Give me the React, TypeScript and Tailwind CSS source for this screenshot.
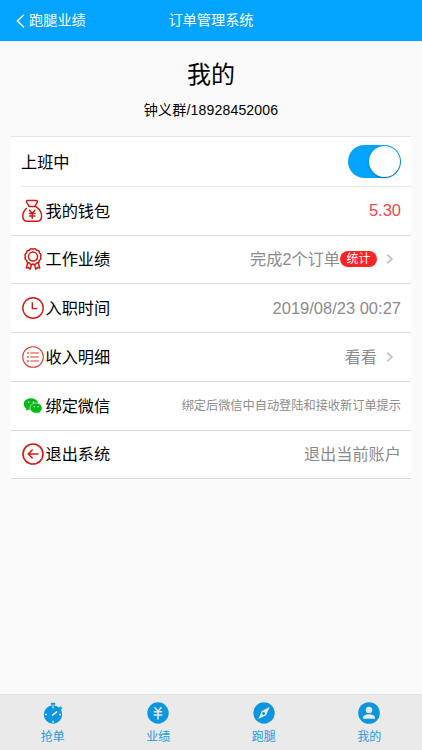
import type { ReactNode } from "react";

function MoneyBagIcon() {
  return (
    <svg viewBox="0 0 22 24" className="h-6 w-[22px]" fill="none" stroke="#d41a12" strokeWidth="1.5" strokeLinecap="round" strokeLinejoin="round">
      <path d="M7.2 7.2 4.6 3.4Q3.9 1.6 5.8 1.4H14Q16 1.6 15.3 3.4L13 7.2" />
      <path d="M7.3 7.4H13.6C16.4 9.2 19.6 13 19.6 17.2 19.6 20.5 17.9 22.2 14.8 22.2H5.5C2.3 22.2.8 20.4.8 17.2.8 14.2 2.3 11.4 4.4 9.5" />
      <path d="M7.6 11.4 10.2 14.2 12.8 11.4M10.2 14.2V19.2M7.5 14.6H12.9M7.5 17H12.9" />
    </svg>
  );
}

function MedalIcon() {
  return (
    <svg viewBox="0 0 22 24" className="h-6 w-[22px]" fill="none" stroke="#d41a12" strokeWidth="1.5" strokeLinecap="round" strokeLinejoin="round">
      <path d="M11 2.2Q13.2.8 14.7 3.3 17.4 3.1 17.4 5.8 19.8 7.2 18.5 9.6 19.8 12.1 17.4 13.4 17.3 16 14.7 15.9 13.2 18.3 11 17 8.8 18.3 7.3 15.9 4.7 16 4.6 13.4 2.2 12.1 3.5 9.6 2.2 7.2 4.6 5.8 4.6 3.1 7.3 3.3 8.8.8 11 2.2Z" />
      <circle cx="11" cy="9.6" r="4.5" />
      <path d="M5.7 16 4.3 21 6.5 20.6 8.2 22.1 9.4 17.8M16.3 16 17.7 21 15.5 20.6 13.8 22.1 12.6 17.8" />
    </svg>
  );
}

function ClockIcon() {
  return (
    <svg viewBox="0 0 22 22" className="size-[22px]" fill="none" stroke="#d41a12" strokeWidth="1.4">
      <circle cx="11" cy="11" r="10.2" />
      <path d="M10.3 5.3V11.6H15" />
    </svg>
  );
}

function ListIcon() {
  return (
    <svg viewBox="0 0 22 22" className="size-[22px]" fill="none" stroke="#d93a2b" strokeWidth="1.1">
      <circle cx="11" cy="11" r="10.3" />
      <path d="M8.3 7H16.8M8.3 11H16.8M8.3 15H16.8" />
      <path d="M5.2 7H6.8M5.2 11H6.8M5.2 15H6.8" strokeWidth="1.6" />
    </svg>
  );
}

function WechatIcon() {
  return (
    <svg viewBox="0 0 22 22" className="size-[22px]">
      <path fill="#06b914" d="M9 3.2C4.9 3.2 1.7 5.8 1.7 9.1c0 1.9 1 3.5 2.7 4.6l-.7 2.2 2.6-1.3c.9.3 1.8.4 2.8.4 4.1 0 7.1-2.5 7.1-5.9S13.1 3.2 9 3.2Z" />
      <path fill="#06b914" stroke="#fff" strokeWidth=".6" d="M14.1 8c-3.5 0-6.1 2.3-6.1 5.1s2.6 5.1 6.1 5.1c.7 0 1.4-.1 2.1-.3l2.1 1.1-.6-1.9c1.5-1 2.4-2.3 2.4-4 0-2.8-2.6-5.1-6-5.1Z" />
      <g fill="#fff">
        <circle cx="6.6" cy="7.3" r=".8" />
        <circle cx="11.4" cy="7.3" r=".8" />
        <circle cx="12.2" cy="11.7" r=".65" />
        <circle cx="16.1" cy="11.7" r=".65" />
      </g>
    </svg>
  );
}

function ExitIcon() {
  return (
    <svg viewBox="0 0 22 22" className="size-[22px]" fill="none" stroke="#d41a12" strokeWidth="1.6" strokeLinecap="round" strokeLinejoin="round">
      <circle cx="11" cy="11" r="10" />
      <path d="M16 11H6.4M10.2 7 6.2 11 10.2 15" />
    </svg>
  );
}

function StopwatchIcon() {
  return (
    <svg viewBox="0 0 22 22" className="size-[22px]">
      <g fill="#0c96e0">
        <path d="M8.8.8h4.4v2H8.8z" />
        <circle cx="11" cy="12.5" r="9.2" />
        <path d="m16.6 6 1.8-1.8 2 1.8-1.8 2z" />
      </g>
      <path d="M10.6 13.2 14.7 9.8" stroke="#eaeaea" strokeWidth="1.6" strokeLinecap="round" />
      <path d="M11 4.2V6.2M11 18.8V20.8M2.9 12.5H4.9M17.1 12.5H19.1" stroke="#eaeaea" strokeWidth="1.3" />
    </svg>
  );
}

function YenIcon() {
  return (
    <svg viewBox="0 0 22 22" className="size-[22px]">
      <circle cx="11" cy="11" r="10.7" fill="#0c96e0" />
      <path d="M7.5 5.2 11 9.2 14.5 5.2M11 9.2V17.6M6.7 9.8H15.3M6.7 13.1H15.3" fill="none" stroke="#eaeaea" strokeWidth="1.5" />
    </svg>
  );
}

function CompassIcon() {
  return (
    <svg viewBox="0 0 22 22" className="size-[22px]">
      <circle cx="11" cy="11" r="10.7" fill="#0c96e0" />
      <path d="M16.7 5.1 13 13.3 5.3 17 8.9 8.9Z" fill="#eaeaea" />
      <circle cx="10.6" cy="11.5" r="1.4" fill="#0c96e0" />
    </svg>
  );
}

function UserIcon() {
  return (
    <svg viewBox="0 0 22 22" className="size-[22px]">
      <circle cx="11" cy="11" r="10.8" fill="#0c96e0" />
      <circle cx="11" cy="7.9" r="3.2" fill="#eaeaea" />
      <path d="M5 16.8V15.6C5 13.5 8.5 12.3 11 12.3S17 13.5 17 15.6V16.8Z" fill="#eaeaea" />
    </svg>
  );
}

function Chevron() {
  return (
    <svg viewBox="0 0 8 12" className="mr-[7px] h-3 w-2" fill="none" stroke="#c4c4c8" strokeWidth="1.8">
      <path d="M1.3 1.6 5.9 6 1.3 10.4" />
    </svg>
  );
}

type Row = {
  label: string;
  icon: ReactNode;
  value: ReactNode;
};

const rows: Row[] = [
  {
    label: "我的钱包",
    icon: <MoneyBagIcon />,
    value: <span className="text-[16.5px] text-[#ee4650]">5.30</span>,
  },
  {
    label: "工作业绩",
    icon: <MedalIcon />,
    value: (
      <>
        <span>完成2个订单</span>
        <span className="mr-[9px] flex h-4 w-[37px] items-center justify-center rounded-full bg-[#fb2424] text-xs text-white">统计</span>
        <Chevron />
      </>
    ),
  },
  { label: "入职时间", icon: <ClockIcon />, value: <span className="text-[16.5px]">2019/08/23 00:27</span> },
  {
    label: "收入明细",
    icon: <ListIcon />,
    value: (
      <>
        <span className="mr-[9px]">看看</span>
        <Chevron />
      </>
    ),
  },
  {
    label: "绑定微信",
    icon: <WechatIcon />,
    value: <span className="text-[12.2px]">绑定后微信中自动登陆和接收新订单提示</span>,
  },
  { label: "退出系统", icon: <ExitIcon />, value: "退出当前账户" },
];

const tabs = [
  { label: "抢单", icon: <StopwatchIcon /> },
  { label: "业绩", icon: <YenIcon /> },
  { label: "跑腿", icon: <CompassIcon /> },
  { label: "我的", icon: <UserIcon /> },
];

export default function App() {
  return (
    <div className="flex h-[750px] w-[422px] flex-col overflow-hidden bg-[#fafafa] font-['Liberation_Sans','Noto_Sans_CJK_SC',sans-serif] text-black">
      <header className="grid h-[41px] shrink-0 grid-cols-3 items-center bg-[#02a4ff] text-[14.2px] text-white">
        <div className="flex items-center gap-1 pl-4">
          <svg viewBox="0 0 9 14" className="mt-0.5 h-3.5 w-[9px]" fill="none" stroke="currentColor" strokeWidth="1.4">
            <path d="M8 .8 1.3 7 8 13.2" />
          </svg>
          <span className="whitespace-nowrap">跑腿业绩</span>
        </div>
        <div className="text-center">订单管理系统</div>
      </header>

      <div className="flex h-[95px] shrink-0 flex-col items-center pt-4">
        <h1 className="text-2xl leading-9">我的</h1>
        <p className="mt-[7px] text-[14.1px] leading-5 tracking-[0.15px]">钟义群/18928452006</p>
      </div>

      <main className="mx-[11px] border-t border-[#e6e6e6] bg-white text-[16.2px]">
        <div className="flex h-[48.8px] items-center justify-between pr-2.5">
          <span className="pt-0.5 pl-2.5">上班中</span>
          <div className="flex h-[33px] w-[53px] items-center justify-end rounded-full bg-[#02a4ff] pr-px">
            <div className="size-[31px] rounded-full bg-white shadow-[0_1px_2px_rgba(0,0,0,0.35)]" />
          </div>
        </div>
        <div className="ml-2.5 h-px bg-[#e8e8e8]" />
        {rows.map((row) => (
          <div key={row.label} className="flex h-[48.75px] items-center justify-between border-b border-[#dadada] pr-2.5 pl-[11px]">
            <div className="flex items-center gap-[1.5px]">
              {row.icon}
              <span>{row.label}</span>
            </div>
            <div className="flex items-center text-[#8c8c8c]">{row.value}</div>
          </div>
        ))}
      </main>

      <nav className="mt-auto grid h-14 shrink-0 grid-cols-4 border-t border-[#e2e2e2] bg-[#eaeaea] text-xs text-[#1c9de4]">
        {tabs.map((tab) => (
          <div key={tab.label} className="flex flex-col items-center pt-[7px]">
            {tab.icon}
            <span className="mt-[5px] leading-4">{tab.label}</span>
          </div>
        ))}
      </nav>
    </div>
  );
}
